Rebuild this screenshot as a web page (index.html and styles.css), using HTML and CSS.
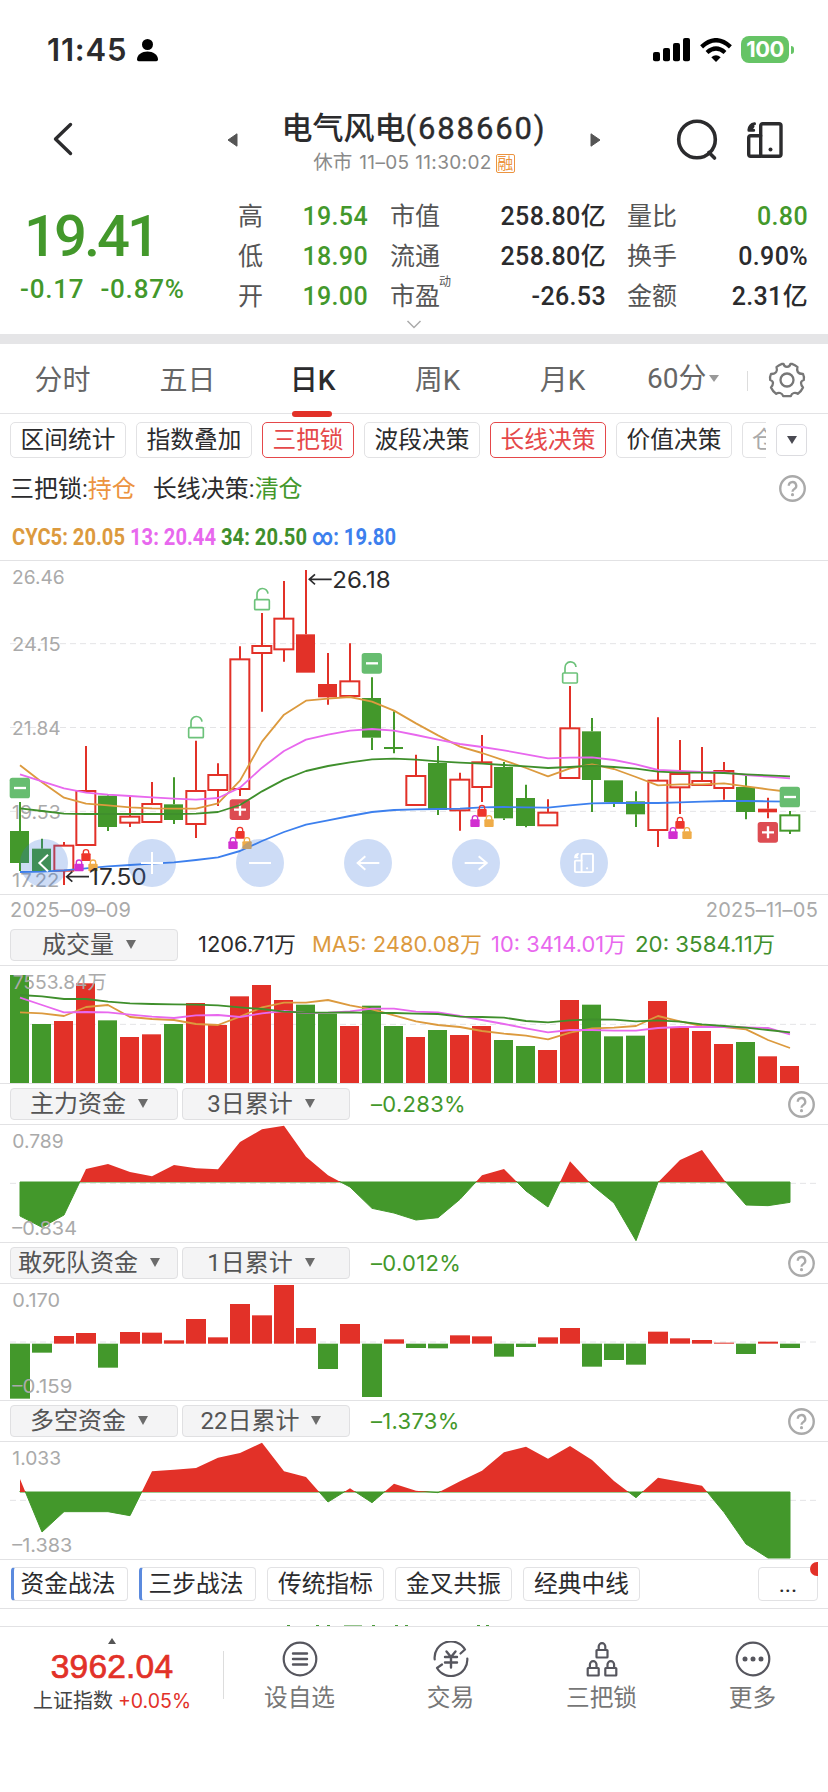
FILE: index.html
```html
<!DOCTYPE html>
<html lang="zh-CN">
<head>
<meta charset="utf-8">
<title>电气风电(688660)</title>
<link rel="stylesheet" href="styles.css">
</head>
<body>
<svg class="defs" width="0" height="0">
  <defs>
    <symbol id="help" viewBox="0 0 26 26">
      <circle cx="13" cy="13" r="11.800" fill="none" stroke="#aaa" stroke-width="2.300"/>
      <path d="M9.400 10.400a3.600 3.600 0 1 1 5.400 3.100c-1.300.8-1.800 1.300-1.800 2.600" fill="none" stroke="#aaa" stroke-width="2.200"/>
      <circle cx="13" cy="18.900" r="1.500" fill="#aaa"/>
    </symbol>
    <symbol id="rotate" viewBox="0 0 38 38">
      <g fill="none" stroke="currentColor" stroke-width="3.400" stroke-linejoin="round" stroke-linecap="round">
        <rect x="14.700" y="2.700" width="20.300" height="32.600" rx="2"/>
        <path d="M14.700 14.700H4.700q-2 0-2 2v16.600q0 2 2 2h10"/>
        <path d="M8.500 2.700Q3.500 3.500 2.900 9M2.900 9.200h4.800M3 9L7 5.500" stroke-width="3"/>
      </g>
      <circle cx="24.500" cy="28.500" r="2" fill="currentColor"/>
    </symbol>
  </defs>
</svg>

<div class="status">
  <span class="clock">11:45</span>
  <svg class="person" width="21" height="24" viewBox="0 0 21 24"><circle cx="10.500" cy="6.500" r="5.500"/><path d="M0 21.500C0 16.500 5 13.500 10.500 13.500S21 16.500 21 21.500Q21 23.200 19.300 23.200H1.700Q0 23.200 0 21.500Z"/></svg>
  <svg class="signal" width="38" height="24" viewBox="0 0 38 24"><rect x="0" y="14" width="7" height="9.300" rx="2"/><rect x="10" y="10" width="7" height="13.300" rx="2"/><rect x="20" y="5" width="7" height="18.300" rx="2"/><rect x="30" y="0" width="7" height="23.300" rx="2"/></svg>
  <svg class="wifi" width="32" height="24" viewBox="0 0 32 24"><g fill="none" stroke="#000" stroke-width="4.300"><path d="M1.600 8.800Q16-4.400 30.400 8.800"/><path d="M7 14.500Q16 6.600 25 14.500"/></g><path d="M11.300 19.200Q16 15.200 20.700 19.200L16 24Z"/></svg>
  <span class="battery">100</span><i class="battery-tip"></i>
</div>

<header class="head">
  <svg class="back" width="22" height="34" viewBox="0 0 22 34"><path d="M18.500 2.500L3.500 17l15 14.500" fill="none" stroke="#2b2b2d" stroke-width="3.400" stroke-linecap="round" stroke-linejoin="round"/></svg>
  <svg class="prev" width="11" height="14" viewBox="0 0 11 14"><path d="M1 7L10 .8V13.200Z" fill="#555" stroke="#555" stroke-linejoin="round"/></svg>
  <div class="title">
    <h1>电气风电<span>(688660)</span></h1>
    <p>休市 <span>11–05 11:30:02</span><b>融</b></p>
  </div>
  <svg class="next" width="11" height="14" viewBox="0 0 11 14"><path d="M10 7L1 .8V13.200Z" fill="#555" stroke="#555" stroke-linejoin="round"/></svg>
  <svg class="search" width="42" height="42" viewBox="0 0 42 42"><g fill="none" stroke="#2b2b2d" stroke-width="3.600" stroke-linecap="round"><circle cx="21" cy="20.500" r="18.300"/><path d="M33 33.500l5.500 5.500"/></g></svg>
  <svg class="rot" width="38" height="38"><use href="#rotate"/></svg>
</header>

<section class="quote">
  <div class="price"><strong>19.41</strong><div><span>-0.17</span><span>-0.87%</span></div></div>
  <div class="stats">
    <label>高</label><b class="g">19.54</b><label>市值</label><b>258.80亿</b><label>量比</label><b class="g">0.80</b>
    <label>低</label><b class="g">18.90</b><label>流通</label><b>258.80亿</b><label>换手</label><b>0.90%</b>
    <label>开</label><b class="g">19.00</b><label>市盈<sup>动</sup></label><b>-26.53</b><label>金额</label><b>2.31亿</b>
  </div>
  <svg class="more" width="16" height="9" viewBox="0 0 16 9"><path d="M1.500 1L8 7.500 14.500 1" fill="none" stroke="#aaa" stroke-width="1.500"/></svg>
</section>

<nav class="tabs">
  <a>分时</a><a>五日</a><a class="on">日K</a><a>周K</a><a>月K</a><a class="min">60分<i></i></a>
  <svg class="gear" width="38" height="38" viewBox="-19 -19 38 38"><g fill="none" stroke="#777" stroke-width="2.300" stroke-linejoin="round"><path d="M-5-16.200H-3.500Q-3-13.200 0-13.200T3.500-16.200H5Q8-15.200 10.500-13Q9.500-10 10.800-8T16-6Q17.500-3 16.800 0Q14 1 14 3T16 7.500Q14.500 11 10.800 13.800Q9 12.500 6.800 13T3.800 16.200H-3.800Q-4.600 13.600-6.800 13T-10.800 13.800Q-14.500 11-16 7.500Q-14 5-14 3T-16.800 0Q-17.500-3-16-6Q-12-6-10.800-8T-10.500-13Q-8-15.200-5-16.200Z"/><circle r="6.500"/></g></svg>
</nav>

<div class="chips">
  <span>区间统计</span><span>指数叠加</span><span class="on">三把锁</span><span>波段决策</span><span class="on">长线决策</span><span>价值决策</span><span class="cut">仓</span>
  <i class="drop"></i>
</div>

<div class="hint"><span>三把锁:<em class="o">持仓</em></span><span>长线决策:<em class="g">清仓</em></span><svg class="help" width="27" height="27"><use href="#help"/></svg></div>
<svg class="cyc" id="cyc" width="828" height="46" viewBox="0 0 828 46"></svg>

<section class="panel kline"><svg id="kline" width="828" height="333" viewBox="0 33 2484 999"></svg></section>
<div class="volhead">
  <div class="dates"><span>2025–09–09</span><span>2025–11–05</span></div>
  <div class="ctl"><button>成交量<i></i></button><svg id="ma" width="620" height="32" viewBox="0 0 620 32"></svg></div>
</div>
<section class="panel"><svg id="vol" width="828" height="117" viewBox="0 228 2484 351"></svg></section>
<div class="ctl row"><button>主力资金<i></i></button><button>3日累计<i></i></button><em>–0.283%</em><svg class="help" width="27" height="27"><use href="#help"/></svg></div>
<section class="panel"><svg id="main" width="828" height="117" viewBox="0 15 2484 351"></svg></section>
<div class="ctl row"><button>敢死队资金<i></i></button><button>1日累计<i></i></button><em>–0.012%</em><svg class="help" width="27" height="27"><use href="#help"/></svg></div>
<section class="panel"><svg id="dare" width="828" height="116" viewBox="0 492 2484 348"></svg></section>
<div class="ctl row"><button>多空资金<i></i></button><button>22日累计<i></i></button><em>–1.373%</em><svg class="help" width="27" height="27"><use href="#help"/></svg></div>
<section class="panel"><svg id="bull" width="828" height="117" viewBox="0 126 2484 351"></svg></section>

<div class="methods">
  <span class="blue">资金战法</span><span class="blue">三步战法</span><span>传统指标</span><span>金叉共振</span><span>经典中线</span><span class="dots">...</span>
</div>
<div class="peek"><svg width="828" height="17" viewBox="0 0 828 17"><g fill="#4a9a3a"><path d="M287 16h3v1h-3zM316 16h3v1h-3zM327 16h3v1h-3zM372 16h3v1h-3zM395 16h3v1h-3zM405 16h3v1h-3zM477 16h3v1h-3zM486 16h3v1h-3z"/><path d="M344 16h18v1h-18z" opacity=".6"/></g></svg></div>

<footer class="bar">
  <div class="index"><i></i><strong>3962.04</strong><p>上证指数 <span>+0.05%</span></p></div>
  <div class="item"><svg width="36" height="36" viewBox="-18 -18 36 36"><g class="ln"><circle r="16.300"/><path d="M-7-5.500H7M-7 0H7M-7 5.500H7" stroke-width="2.400"/></g></svg>设自选</div>
  <div class="item"><svg width="36" height="36" viewBox="-18 -18 36 36"><g class="ln"><path d="M-16.300.500A16.300 16.300 0 0 1 14-9.500L9.500-5.500M16.300-.500A16.300 16.300 0 0 1-14 9L-9 5.500"/><path d="M-4.500-7.500L0-2 4.500-7.500M0-2V8.500M-6-2H6M-6 3.500H6" stroke-width="2.400"/></g></svg>交易</div>
  <div class="item"><svg width="36" height="36" viewBox="-18 -18 36 36"><g class="ln"><g id="lk"><rect x="-5.500" y="-9" width="11" height="7.500" rx=".5"/><path d="M-3.300-9V-12.500a3.300 3.300 0 0 1 6.600 0V-9"/></g><use href="#lk" x="-8.800" y="18"/><use href="#lk" x="8.800" y="18"/></g></svg>三把锁</div>
  <div class="item"><svg width="36" height="36" viewBox="-18 -18 36 36"><g class="ln"><circle r="16.300"/></g><g fill="#56565e"><circle cx="-8" r="2.500"/><circle r="2.500"/><circle cx="8" r="2.500"/></g></svg>更多</div>
</footer>
<script src="charts.js"></script>
</body>
</html>
```
FILE: styles.css
```css
* { box-sizing: border-box; }
body { margin: 0; width: 828px; height: 1792px; overflow: hidden; background: #fff; color: #2b2b2d; font-family: Roboto, "Noto Sans CJK SC", sans-serif; }
svg { display: block; flex: none; }
em, i { font-style: normal; }
.defs { position: absolute; }
.g { color: #43982b; }
.o { color: #ec9440; }

.status { height: 100px; padding: 38px 31px 0 47px; display: flex; align-items: flex-start; }
.clock { width: 80px; font: 600 31px/24px Inter, sans-serif; letter-spacing: .8px; }
.person { margin-left: 10px; }
.signal { margin-left: 495px; }
.wifi { margin-left: 9px; }
.battery { width: 48px; height: 27px; margin: -2px 0 0 9px; border-radius: 8px; background: #66c466; color: #fff; font: 700 22px/27px Inter, sans-serif; letter-spacing: -.5px; text-align: center; }
.battery-tip { width: 3px; height: 8px; margin: 8px 0 0 2px; border-radius: 0 4px 4px 0; background: #66c466; }

.head { height: 90px; display: flex; align-items: flex-start; }
.back { margin: 22px 0 0 52px; }
.prev { margin: 33px 0 0 153px; }
.title { width: 352px; text-align: center; }
.title h1 { margin: 10px 0 0; font-size: 31px; line-height: 38px; font-weight: 500; white-space: nowrap; }
.title h1 span { letter-spacing: 1.900px; font-weight: 400; -webkit-text-stroke: .4px; }
.title p { display: flex; justify-content: center; align-items: center; gap: 7px; margin: 4px 0 0; font-size: 19.500px; line-height: 22px; color: #8a8a8a; }
.title p span { font-family: Inter, sans-serif; font-size: 19px; letter-spacing: .35px; }
.title p b { width: 19px; height: 19px; margin-left: -3px; border: 1px solid #ec9440; border-radius: 2px; color: #ec9440; font-size: 16px; line-height: 17px; font-weight: 400; display: flex; justify-content: center; }
.next { margin: 33px 0 0; }
.search { margin: 19px 0 0 75px; }
.rot { margin: 21px 0 0 28px; color: #2b2b2d; }

.quote { height: 154px; border-bottom: 10px solid #e5e5e7; display: grid; grid-template: 127px 17px / 238px 570px; }
.price { color: #43982b; padding: 11px 0 0 24px; }
.price strong { display: block; font-size: 58px; line-height: 70px; font-weight: 500; letter-spacing: -3px; }
.price div { display: flex; gap: 16px; margin: 2px 0 0 -4px; font-size: 26px; line-height: 32px; font-weight: 500; letter-spacing: .8px; }
.stats { display: grid; grid-template-columns: 60px 70px 94px 144px 94px 108px; grid-auto-rows: 40px; padding-top: 6px; line-height: 41px; font-size: 25px; }
.stats label { color: #555; position: relative; white-space: nowrap; }
.stats label:nth-of-type(3n+2) { margin-left: 22px; }
.stats label:nth-of-type(3n) { margin-left: 21px; }
.stats b { font-weight: 500; text-align: right; white-space: nowrap; letter-spacing: .35px; }
.stats sup { position: absolute; left: 49px; top: -14px; font-size: 12px; line-height: 40px; }
.more { grid-column: 1 / 3; margin: 3px 0 0 406px; }

.tabs { height: 70px; border-bottom: 1px solid #e3e3e5; display: flex; align-items: center; font-size: 28px; color: #666; }
.tabs a { width: 125px; height: 70px; line-height: 73px; text-align: center; position: relative; }
.tabs .on { color: #2b2b2d; font-weight: 500; }
.tabs .on::after { content: ""; position: absolute; left: 42px; bottom: -3px; width: 40px; height: 6px; border-radius: 3px; background: #e23128; }
.tabs .min { display: flex; align-items: center; gap: 3px; padding-left: 22px; width: 123px; }
.tabs .min i { border: 5px solid transparent; border-top: 7px solid #999; border-bottom: 0; }
.tabs .min::after { content: ""; position: absolute; right: 0; top: 27px; width: 1px; height: 20px; background: #ddd; }
.gear { margin: 2px 0 0 20px; }

.chips { height: 52px; padding: 8px 0 0 10px; display: flex; gap: 10px; font-size: 23.700px; line-height: 34px; }
.chips span { flex: none; width: 116px; height: 36px; border: 1.500px solid #e2e2e4; border-radius: 5px; text-align: center; white-space: nowrap; }
.chips .on { width: 92px; color: #e5484a; border-color: #e5484a; }
.chips .on:nth-child(5) { width: 116px; }
.chips .cut { width: 24px; overflow: hidden; text-align: left; padding-left: 9px; border-right: 0; border-radius: 5px 0 0 5px; color: #aaa; }
.drop { width: 31px; height: 32px; margin: 2px 0 0; border: 1px solid #dcdce0; border-radius: 5px; display: grid; place-items: center; }
.drop::after { content: ""; border: 5.500px solid transparent; border-top: 8px solid #4a4a52; border-bottom: 0; }

.hint { height: 48px; display: flex; align-items: center; gap: 17px; padding: 0 22px 7px 10px; font-size: 24px; }
.hint .help { margin: 4px 0 0 auto; }
.cyc text { font-weight: 700; }

.panel { border-top: 1px solid #e2e2e4; }
.volhead { border-top: 1px solid #e2e2e4; height: 71px; }
.dates { display: flex; justify-content: space-between; height: 34px; padding: 0 10px; font: 20px/31px Inter, sans-serif; letter-spacing: .2px; color: #aaa; }
.ctl { display: flex; align-items: center; gap: 4px; padding-left: 10px; }
.ctl.row { height: 41px; border-top: 1px solid #e2e2e4; padding-right: 13px; }
.ctl button { width: 168px; height: 32px; padding: 0 10px 1px 0; border: 1px solid #e0e0e2; border-radius: 4px; background: #f4f4f5; color: #555; font: 24px/28px Roboto, "Noto Sans CJK SC", sans-serif; display: flex; align-items: center; justify-content: center; gap: 12px; white-space: nowrap; }
.ctl button i { border: 5.500px solid transparent; border-top: 9px solid #6b6b6b; border-bottom: 0; }
.ctl em { margin-left: 17px; color: #43982b; font: 22px/32px Inter, sans-serif; letter-spacing: .3px; }
.ctl .help { margin-left: auto; }
.panel text, #ma text { font-family: Inter, "Noto Sans CJK SC", sans-serif; }

.methods { height: 49px; border-top: 1px solid #e2e2e4; padding: 7px 10px 0 11px; display: flex; gap: 11px; font-size: 23.700px; line-height: 32px; }
.methods span { width: 117px; height: 34px; border: 1px solid #e2e2e4; border-radius: 4px; text-align: center; }
.methods .blue { border-left: 3px solid #5b8ade; padding-right: 5px; white-space: nowrap; }
.methods .dots { width: 60px; margin-left: auto; position: relative; }
.methods .dots::after { content: ""; position: absolute; right: -1px; top: -6px; width: 8px; height: 14px; border-radius: 7px 0 0 7px; background: #e23128; }
.peek { height: 18px; border-top: 1px solid #e2e2e4; }

.bar { height: 166px; border-top: 1px solid #e2e2e4; display: flex; align-items: flex-start; }
.index { width: 224px; height: 72px; display: flex; flex-direction: column; align-items: center; padding-top: 11px; position: relative; }
.index::after { content: ""; position: absolute; right: 0; top: 24px; width: 1px; height: 48px; background: #ddd; }
.index i { border: 4px solid transparent; border-bottom: 6px solid #555; border-top: 0; }
.index strong { margin-top: 4px; font: 400 33.500px/38px "Liberation Sans", sans-serif; letter-spacing: .2px; -webkit-text-stroke: .7px; color: #e23128; }
.index p { margin: 4px 0 0; font-size: 20px; line-height: 22px; color: #444; white-space: nowrap; }
.index p span { color: #e23128; font-family: Inter, sans-serif; font-size: 19.500px; }
.item { width: 151px; padding-top: 14px; display: flex; flex-direction: column; align-items: center; font-size: 23.700px; line-height: 28px; color: #777; }
.item svg { margin-bottom: 7px; }
.ln { fill: none; stroke: #56565e; stroke-width: 2.200; stroke-linecap: round; stroke-linejoin: round; }
```
FILE: charts.js
```js
const RED = '#e23128', GREEN = '#43982b', ORANGE = '#dc9a3e', PINK = '#e868ee', LEAF = '#3f8f2c', BLUE = '#3d80ee';
const x = i => 60 + 66 * i;
const $ = id => document.getElementById(id);

const rect = (l, t, w, h, a) => `<rect x="${l}" y="${t}" width="${w}" height="${h}" ${a}/>`;
const text = (s, l, base, len, size, fill) =>
  `<text x="${l}" y="${base}" font-size="${size}" textLength="${len}" lengthAdjust="spacingAndGlyphs" fill="${fill}">${s}</text>`;
const line = (ys, color) =>
  `<polyline points="${ys.map((y, i) => x(i) + ',' + y).join(' ')}" fill="none" stroke="${color}" stroke-width="5.500" stroke-linejoin="round"/>`;
const dash = y => `<path d="M30 ${y}H2454" stroke="#e4e4e6" stroke-width="3" stroke-dasharray="18 12"/>`;

/* candles: kind (g green, r hollow red, f filled red, h hollow green), high, top, bottom, low */
const candles = [
  ['g',756,843,939,963],['g',866,896,963,963],['r',876,887,962,1005],['r',588,723,885,885],['g',733,737,831,843],
  ['r',738,800,818,831],['r',696,762,816,816],['g',682,763,810,822],['r',572,723,822,864],['r',640,675,720,768],
  ['r',289,328,717,738],['r',189,288,309,485],['r',93,206,298,335],['f',60,253,368,368],['f',309,402,442,464],
  ['r',280,394,438,438],['g',382,444,563,600],['g',484,591,597,610],['r',614,678,765,765],['g',588,639,780,795],
  ['r',668,689,781,842],['r',555,637,711,756],['g',636,651,805,810],['g',704,744,828,832],['r',748,788,826,826],
  ['r',408,535,684,684],['g',504,544,690,786],['g',691,691,756,771],['g',724,754,793,831],['r',502,692,840,891],
  ['r',570,672,712,792],['r',591,693,705,705],['r',636,663,714,749],['g',678,711,786,808],['f',743,776,787,805],
  ['h',783,796,842,852]
];
const drawCandle = ([k, hi, top, bot, lo], i) => {
  const c = k === 'g' || k === 'h' ? GREEN : RED, cx = x(i);
  const wick = `<path d="M${cx} ${hi}V${top}M${cx} ${bot}V${lo}" stroke="${c}" stroke-width="6"/>`;
  return wick + (k === 'r' || k === 'h'
    ? rect(cx - 29, top, 57, bot - top, `fill="none" stroke="${c}" stroke-width="6"`)
    : rect(cx - 30, top, 57, bot - top, `fill="${c}"`));
};

const openLock = (cx, y) => `<g fill="none" stroke="#6cc27a" stroke-width="5">${rect(cx - 22, y, 44, 30, 'rx="3"')}
  <path d="M${cx - 15} ${y}V${y - 16}a16 16 0 0 1 33 -2"/></g>`;
const lock = (cx, y, c) => rect(cx - 14, y + 13, 28, 23, `rx="3" fill="${c}"`) +
  `<path d="M${cx - 8} ${y + 14}V${y + 9}a8 7 0 0 1 16 0V${y + 14}" fill="none" stroke="${c}" stroke-width="4"/>`;
const locks = (i, y) => lock(x(i), y, '#ee352b') + lock(x(i) - 21, y + 31, '#d12fd0') + lock(x(i) + 21, y + 31, '#efac48');
const badge = (i, y, plus) => rect(x(i) - 31, y - 31, 61, 62, `rx="8" fill="${plus ? '#dd4c52' : '#67bd70'}"`) +
  `<path d="M${x(i) - 18} ${y}h36${plus ? `M${x(i)} ${y - 18}v36` : ''}" stroke="#fff" stroke-width="7"/>`;
const circle = cx => `<circle cx="${cx}" cy="939" r="72" fill="rgb(55,115,219)" fill-opacity=".25"/>`;
const arrow = (l, y) => `<path d="M${l + 67} ${y}H${l}M${l + 17} ${y - 15}L${l} ${y}l17 15" fill="none" stroke="#2b2b2d" stroke-width="5"/>`;

$('kline').innerHTML = [281, 532.5, 784].map(dash).join('') +
  text('26.46', 36, 102, 158, 58, '#aaa') + text('24.15', 36, 303, 146, 58, '#aaa') + text('21.84', 36, 555, 146, 58, '#aaa') +
  text('19.53', 36, 807, 146, 58, '#aaa') + text('17.22', 36, 1011, 142, 58, '#aaa') +
  candles.map(drawCandle).join('') +
  line([966,965,961,955,949,945,941,937,930,922,903,873,846,824,811,798,786,780,778,777,776,772,771,772,773,766,760,759,759,759,757,755,753,753,754,755], BLUE) +
  line([646,697,743,761,766,772,775,776,776,760,692,575,494,452,446,441,455,482,520,556,590,609,631,654,679,655,643,657,681,706,703,703,700,709,718,726], ORANGE) +
  line([673,694,715,728,734,738,742,746,749,744,713,653,603,569,554,542,537,542,555,569,582,591,601,613,625,623,622,630,643,660,663,666,667,675,680,685], PINK) +
  badge(10, 779, true) +
  line([775,783,791,792,792,792,792,792,791,786,765,724,689,663,648,637,628,626,629,634,638,641,645,649,654,651,647,651,656,665,668,668,669,673,676,679], LEAF) +
  badge(0, 714) + badge(16, 340) + badge(35, 741) + badge(34, 847, true) +
  openLock(588, 533) + openLock(786, 149) + openLock(1710, 369) +
  locks(3, 897) + locks(10, 830) + locks(21, 764) + locks(30, 800) +
  arrow(928, 88) + text('26.18', 997, 114, 175, 68, '#2b2b2d') + arrow(200, 980) + text('17.50', 267, 1005, 173, 68, '#2b2b2d') +
  [132, 456, 780, 1104, 1428, 1752].map(circle).join('') +
  `<g fill="none" stroke="#fff" stroke-width="6"><path d="M144 914l-26 25 26 25M423 939h66M456 906v66M747 939h66M1138 939h-66M1096 919l-23 20 23 20M1394 939h66M1436 919l24 20-24 20"/></g>
   <svg x="1720" y="907" width="64" height="64" color="#fff"><use href="#rotate"/></svg>`;

const tops = [255,402,393,280,391,441,433,402,339,405,319,285,330,344,371,408,347,408,441,420,435,408,450,468,480,330,344,439,437,333,411,423,462,456,499,528];
const volColors = 'ggrrgrrgrrrrrggrggrgrrggrrgggrrrrgrr';
$('vol').innerHTML = dash(403) + tops.map((t, i) => rect(x(i) - 30, t, 57, 579 - t, `fill="${volColors[i] === 'g' ? GREEN : RED}"`)).join('') +
  line([367,370,378,351,345,381,387,390,402,405,380,352,338,338,330,346,358,376,394,405,411,423,431,437,448,428,415,413,408,378,394,408,411,418,450,474], ORANGE) +
  line([323,345,367,366,367,374,380,384,376,375,381,370,363,369,368,364,356,356,365,367,378,390,402,415,427,420,420,422,422,414,411,411,411,412,414,433], PINK) +
  line([315,319,327,327,335,340,342,343,344,346,352,357,365,368,368,367,369,369,371,372,380,381,383,393,397,391,388,389,394,391,395,403,408,413,420,427], LEAF) +
  text('7553.84万', 38, 297, 282, 58, '#aaa');

const area = (id, ys, base, gridY, labels) => {
  const pts = `${x(0)},${base} ${ys.map((y, i) => x(i) + ',' + y).join(' ')} ${x(35)},${base}`;
  $(id).innerHTML = dash(gridY) +
    `<clipPath id="${id}-up">${rect(0, base - 400, 2484, 400, '')}</clipPath><clipPath id="${id}-dn">${rect(0, base - 3, 2484, 400, '')}</clipPath>
     <polygon points="${pts}" fill="${GREEN}" stroke="${GREEN}" stroke-width="3" clip-path="url(#${id}-dn)"/>
     <polygon points="${pts}" fill="${RED}" clip-path="url(#${id}-up)"/>` + labels;
};
area('main', [288,322,285,147,132,156,169,135,145,148,66,28,17,110,166,201,265,279,300,293,238,166,147,213,261,124,195,249,362,187,120,90,180,255,257,247], 186, 190,
  text('0.789', 37, 83, 154, 58, '#aaa') + text('–0.834', 37, 345, 194, 58, '#aaa'));
area('bull', [237,396,335,335,335,347,214,209,204,173,159,128,214,231,306,265,308,251,272,278,244,212,157,140,176,138,180,243,293,233,245,257,337,432,474,474], 276, 301,
  text('1.033', 37, 195, 146, 58, '#aaa') + text('–1.383', 37, 457, 180, 58, '#aaa'));

const flows = [836,698,648,639,743,636,638,661,597,652,552,586,495,624,747,612,831,658,684,685,646,649,710,681,652,624,740,720,734,635,655,660,668,702,665,684];
$('dare').innerHTML = dash(666) + flows.map((y, i) => {
  const up = y < 671;
  return rect(x(i) - 30, up ? y : 671, 60, Math.abs(671 - y), `fill="${up ? RED : GREEN}"`);
}).join('') + text('0.170', 37, 560, 143, 58, '#aaa') + text('–0.159', 37, 819, 180, 58, '#aaa');

const legend = [['CYC5: 20.05', ORANGE], ['13: 20.44', PINK], ['34: 20.50', LEAF], ['∞: 19.80', BLUE]]
  .map(([s, c]) => `<tspan fill="${c}">${s}</tspan>`).join(' ');
$('cyc').innerHTML = text(legend, 12, 31, 384, 24, ORANGE);
$('ma').innerHTML = text('1206.71万', 16, 23, 98, 21.5, '#2b2b2d') + text('MA5: 2480.08万', 130, 23, 170, 21.5, ORANGE) +
  text('10: 3414.01万', 309, 23, 135, 21.5, PINK) + text('20: 3584.11万', 453, 23, 140, 21.5, LEAF);
```
